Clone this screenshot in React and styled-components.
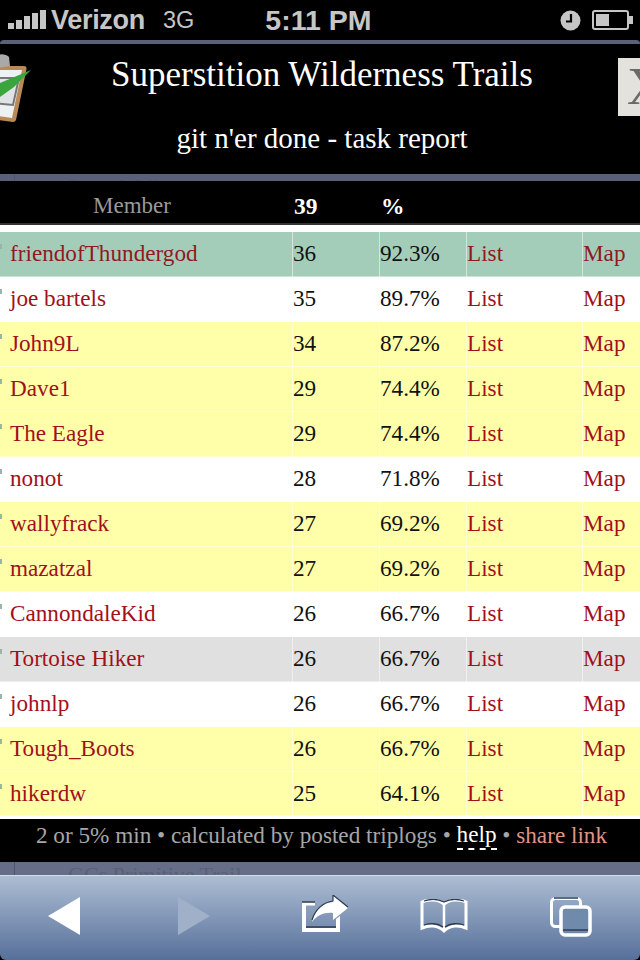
import React from 'react';
import styled, { createGlobalStyle } from 'styled-components';

const Global = createGlobalStyle`
  html, body { margin: 0; padding: 0; background: #000; }
  body { width: 640px; height: 960px; overflow: hidden; font-family: "Liberation Serif", serif; }
`;

const Screen = styled.div`
  width: 640px;
  height: 960px;
  display: flex;
  flex-direction: column;
  background: #000;
  overflow: hidden;
`;

const StatusBar = styled.div`
  height: 40px;
  display: flex;
  align-items: center;
  padding: 0 6px 0 8px;
  font-family: "Liberation Sans", sans-serif;
  color: #c6c6c6;
`;
const Carrier = styled.span`
  font-size: 27px;
  font-weight: 700;
  margin-left: 5px;
  letter-spacing: -0.3px;
`;
const Network = styled.span`
  font-size: 23.5px;
  margin-left: 18px;
`;
const Clock = styled.span`
  font-size: 28.5px;
  font-weight: 700;
  margin-left: 71px;
`;
const StatusRight = styled.div`
  margin-left: auto;
  display: flex;
  align-items: center;
  gap: 11px;
`;

const TopEdge = styled.div`
  height: 4px;
  background: #5b6178;
  border-radius: 4px 4px 0 0;
`;

const Header = styled.header`
  height: 130px;
  display: grid;
  grid-template-columns: 32px 1fr 22px;
  overflow: hidden;
`;
const Logo = styled.svg`
  width: 32px;
  height: 72px;
  margin-top: 9px;
`;
const Titles = styled.div`
  text-align: center;
  color: #fff;
  padding: 7px 6px 0 0;
`;
const Title = styled.h1`
  margin: 0;
  font-size: 35px;
  line-height: 48px;
  font-weight: 400;
`;
const Subtitle = styled.h2`
  margin: 19px 0 0;
  font-size: 29px;
  line-height: 40px;
  font-weight: 400;
`;
const CloseTile = styled.div`
  width: 22px;
  height: 58px;
  margin-top: 14px;
  background: #e4e2dc;
  overflow: hidden;
  color: #6b6b66;
  font-size: 52px;
  line-height: 58px;
  padding-left: 9px;
  box-sizing: border-box;
  white-space: nowrap;
`;

const PageBehind = styled.div`
  height: ${p => p.$h}px;
  overflow: hidden;
  padding-left: 68px;
  background: linear-gradient(#4f556d, #4f556d) 14px 0 / 1px 100% no-repeat, ${p => p.$bg};
  color: ${p => p.$ink};
  font-size: 22px;
  line-height: 26px;
`;

const HeadRow = styled.div`
  height: 44px;
  padding-top: 8px;
  box-sizing: border-box;
  display: grid;
  grid-template-columns: 292px 87px 87px 116px 58px;
  align-items: center;
  border-bottom: 2px solid #333;
  color: #fff;
  font-size: 23.5px;
`;
const HeadMember = styled.span`
  color: #9a9a9a;
  padding-left: 93px;
  font-size: 23px;
`;
const HeadNum = styled.b`
  padding-left: 2px;
`;

const Table = styled.div`
  background: #fff;
  padding: 7px 0 3px;
`;
const rowColors = { green: '#a4cdb9', yellow: '#ffffa9', gray: '#e0e0e0', white: '#fff' };
const Row = styled.div`
  --link: ${p => (p.$tone === 'green' ? '#8e1a1f' : '#a30f1b')};
  height: ${p => p.$h || 45}px;
  display: grid;
  grid-template-columns: 292px 87px 87px 116px 58px;
  align-items: center;
  background: ${p => rowColors[p.$tone]};
  box-shadow: inset 0 -1px 0 rgba(255, 255, 255, 0.45);
  font-size: 23.2px;
  color: #111;
`;
const Cell = styled.span`
  height: 100%;
  display: flex;
  align-items: center;
  padding: 0 0 2px 1px;
  box-shadow: inset 1px 0 0 rgba(255, 255, 255, 0.5);
  box-sizing: border-box;
`;
const NameCell = styled(Cell)`
  position: relative;
  padding-left: 10px;
  box-shadow: none;
  color: var(--link);
  &::before {
    content: '';
    position: absolute;
    left: 0;
    top: 12px;
    width: 2px;
    height: 5px;
    background: #9ab5a8;
  }
`;
const LinkCell = styled(Cell)`
  color: var(--link);
`;

const Footer = styled.div`
  height: 43px;
  padding-bottom: 10px;
  box-sizing: border-box;
  display: flex;
  align-items: center;
  justify-content: center;
  color: #a6a6a6;
  font-size: 23.2px;
  white-space: pre;
  padding-left: 3px;
`;
const Help = styled.span`
  color: #fff;
  border-bottom: 2px dashed #fff;
  line-height: 27px;
`;
const Share = styled.span`
  color: #e09488;
`;

const Toolbar = styled.nav`
  flex: 1;
  display: flex;
  align-items: center;
  padding: 0 0 4px 48px;
  box-sizing: border-box;
  background: linear-gradient(#adbdd3, #56709a);
  border-top: 1px solid #d3dce8;
  border-radius: 0 0 6px 6px;
`;
const ToolIcon = styled.svg`
  display: block;
  flex: none;
  margin-left: ${p => p.$gap || 0}px;
  margin-top: ${p => p.$dy || 0}px;
`;

const members = [
  ['friendofThundergod', 36, '92.3%', 'green'],
  ['joe bartels', 35, '89.7%', 'white'],
  ['John9L', 34, '87.2%', 'yellow'],
  ['Dave1', 29, '74.4%', 'yellow'],
  ['The Eagle', 29, '74.4%', 'yellow'],
  ['nonot', 28, '71.8%', 'white'],
  ['wallyfrack', 27, '69.2%', 'yellow'],
  ['mazatzal', 27, '69.2%', 'yellow'],
  ['CannondaleKid', 26, '66.7%', 'white'],
  ['Tortoise Hiker', 26, '66.7%', 'gray'],
  ['johnlp', 26, '66.7%', 'white'],
  ['Tough_Boots', 26, '66.7%', 'yellow'],
  ['hikerdw', 25, '64.1%', 'yellow'],
];

function App() {
  return (
    <Screen>
      <Global />
      <StatusBar>
        <svg width="38" height="19" viewBox="0 0 38 19" style={{ marginTop: -2 }}>
          <g fill="#c6c6c6">
            <rect x="0" y="13" width="6" height="6" />
            <rect x="8" y="10" width="6" height="9" />
            <rect x="16" y="6" width="6" height="13" />
            <rect x="24" y="3" width="6" height="16" />
            <rect x="32" y="0" width="6" height="19" />
          </g>
        </svg>
        <Carrier>Verizon</Carrier>
        <Network>3G</Network>
        <Clock>5:11 PM</Clock>
        <StatusRight>
          <svg width="21" height="21" viewBox="0 0 21 21">
            <circle cx="10.5" cy="10.5" r="10" fill="#c6c6c6" />
            <path d="M11 4v7.5H6" fill="none" stroke="#000" strokeWidth="2.2" />
          </svg>
          <svg width="42" height="20" viewBox="0 0 42 20">
            <rect x="1" y="1" width="35" height="18" rx="2" fill="none" stroke="#c6c6c6" strokeWidth="2" />
            <rect x="4" y="4" width="13" height="12" fill="#c6c6c6" />
            <path d="M37 6h4v8h-4z" fill="#c6c6c6" />
          </svg>
        </StatusRight>
      </StatusBar>
      <TopEdge />
      <Header>
        <Logo viewBox="0 0 32 72">
          <path d="M-8 13L24 13q3 0 2.500 3L16 67q-1 2-3 2L-8 66z" fill="#b98a57" />
          <path d="M-8 17L22 17L12 65L-8 62z" fill="#eef1f4" />
          <path d="M-8 25H19L13 52L-8 50z" fill="#dfe3e6" stroke="#777" strokeWidth="2" />
          <path d="M-4 2q9-2 13 2l1 9-14 2z" fill="#a9a9a9" />
          <path d="M31 17L0 30V44L14 34z" fill="#3aa53c" />
        </Logo>
        <Titles>
          <Title>Superstition Wilderness Trails</Title>
          <Subtitle>git n'er done - task report</Subtitle>
        </Titles>
        <CloseTile>X</CloseTile>
      </Header>
      <PageBehind $h={7} $bg="#5a6079" $ink="#525870">Dave Wells</PageBehind>
      <HeadRow>
        <HeadMember>Member</HeadMember>
        <HeadNum>39</HeadNum>
        <HeadNum>%</HeadNum>
      </HeadRow>
      <Table>
        {members.map((m, i) => (
          <Row key={m[0]} $tone={m[3]} $h={i === 12 ? 44 : 45}>
            <NameCell>{m[0]}</NameCell>
            <Cell>{m[1]}</Cell>
            <Cell>{m[2]}</Cell>
            <LinkCell>List</LinkCell>
            <LinkCell>Map</LinkCell>
          </Row>
        ))}
      </Table>
      <Footer>
        {'2 or 5% min • calculated by posted triplogs • '}
        <Help>help</Help>
        {' • '}
        <Share>share link</Share>
      </Footer>
      <PageBehind $h={13} $bg="#666d86" $ink="#5a6078">GCs Primitive Trail</PageBehind>
      <Toolbar>
        <ToolIcon width="32" height="38" viewBox="0 0 32 38">
          <path d="M32 0v38L0 19z" fill="#fff" />
        </ToolIcon>
        <ToolIcon width="32" height="38" viewBox="0 0 32 38" $gap={98}>
          <path d="M0 0v38l32-19z" fill="#9fb0c8" />
        </ToolIcon>
        <ToolIcon width="48" height="40" viewBox="0 0 48 40" $gap={91} $dy={-2}>
          <path d="M1 7h13v3.500H5V33h30v-9l4-3v16H1z" fill="#fff" />
          <path d="M1 7h13M5 32h30" stroke="#2f3b52" strokeWidth="1.500" />
          <path d="M11 27C13 15 22 8 32 7V0L47 13 32 25V18C24 17 16 20 11 27z" fill="#fff" />
          <path d="M11 25C14 15 22 7 32 6V0L47 12" fill="none" stroke="#2f3b52" strokeWidth="1.200" />
        </ToolIcon>
        <ToolIcon width="48" height="36" viewBox="0 0 48 36" $gap={71} $dy={2}>
          <path d="M24 5C18 0 8 0 2 3V29C9 26 18 26 24 32 30 26 39 26 46 29V3C40 0 30 0 24 5z" fill="none" stroke="#fff" strokeWidth="3" />
          <path d="M24 5V32" stroke="#fff" strokeWidth="2.500" />
          <path d="M4 26C10 24 18 24 23 28M25 28C30 24 38 24 44 26M4 2C10 0 18 0 24 3 30 0 38 0 44 2" fill="none" stroke="#2f3b52" strokeWidth="1.300" />
        </ToolIcon>
        <ToolIcon width="42" height="40" viewBox="0 0 42 40" $gap={82} $dy={2}>
          <rect x="1.500" y="1.500" width="29" height="28" rx="4" fill="none" stroke="#fff" strokeWidth="3" />
          <path d="M4 1h24" stroke="#2f3b52" strokeWidth="1.500" />
          <rect x="11" y="10" width="29" height="28" rx="4" fill="#708aab" stroke="#fff" strokeWidth="3.500" />
          <path d="M13 33h25" stroke="#2f3b52" strokeWidth="1.500" />
        </ToolIcon>
      </Toolbar>
    </Screen>
  );
}

export default App;
